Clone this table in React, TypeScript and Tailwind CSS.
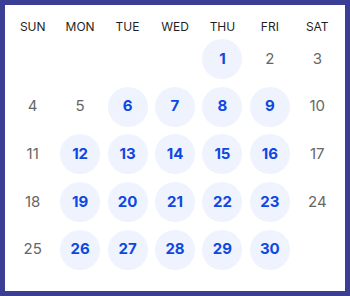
const days = ['SUN', 'MON', 'TUE', 'WED', 'THU', 'FRI', 'SAT'];

// null = empty cell, [day, available]
type Cell = [number, boolean] | null;

const weeks: Cell[][] = [
  [null, null, null, null, [1, true], [2, false], [3, false]],
  [[4, false], [5, false], [6, true], [7, true], [8, true], [9, true], [10, false]],
  [[11, false], [12, true], [13, true], [14, true], [15, true], [16, true], [17, false]],
  [[18, false], [19, true], [20, true], [21, true], [22, true], [23, true], [24, false]],
  [[25, false], [26, true], [27, true], [28, true], [29, true], [30, true], null],
];

const App = () => {
  return (
    <div
      className="h-[296px] w-[350px] border-[5px] border-[#3b3e95] bg-white px-1 pt-[14px]"
      style={{ fontFamily: 'Inter, "Noto Sans", sans-serif' }}
    >
      <div className="grid h-4 grid-cols-7 items-center">
        {days.map((d) => (
          <div key={d} className="text-center text-[12px] font-normal leading-4 text-[#1f1f1f]">
            {d}
          </div>
        ))}
      </div>
      <div className="mt-[4px] flex flex-col gap-y-[7.67px]">
        {weeks.map((week, i) => (
          <div key={i} className="grid h-10 grid-cols-7">
            {week.map((cell, j) => (
              <div key={j} className="flex items-center justify-center">
                {cell &&
                  (cell[1] ? (
                    <div className="flex h-10 w-10 items-center justify-center rounded-full bg-[#eef3fd] text-[15px] font-bold text-[#0e47e1]">
                      {cell[0]}
                    </div>
                  ) : (
                    <span className="text-[15px] font-normal text-[#666]">{cell[0]}</span>
                  ))}
              </div>
            ))}
          </div>
        ))}
      </div>
    </div>
  );
};

export default App;
